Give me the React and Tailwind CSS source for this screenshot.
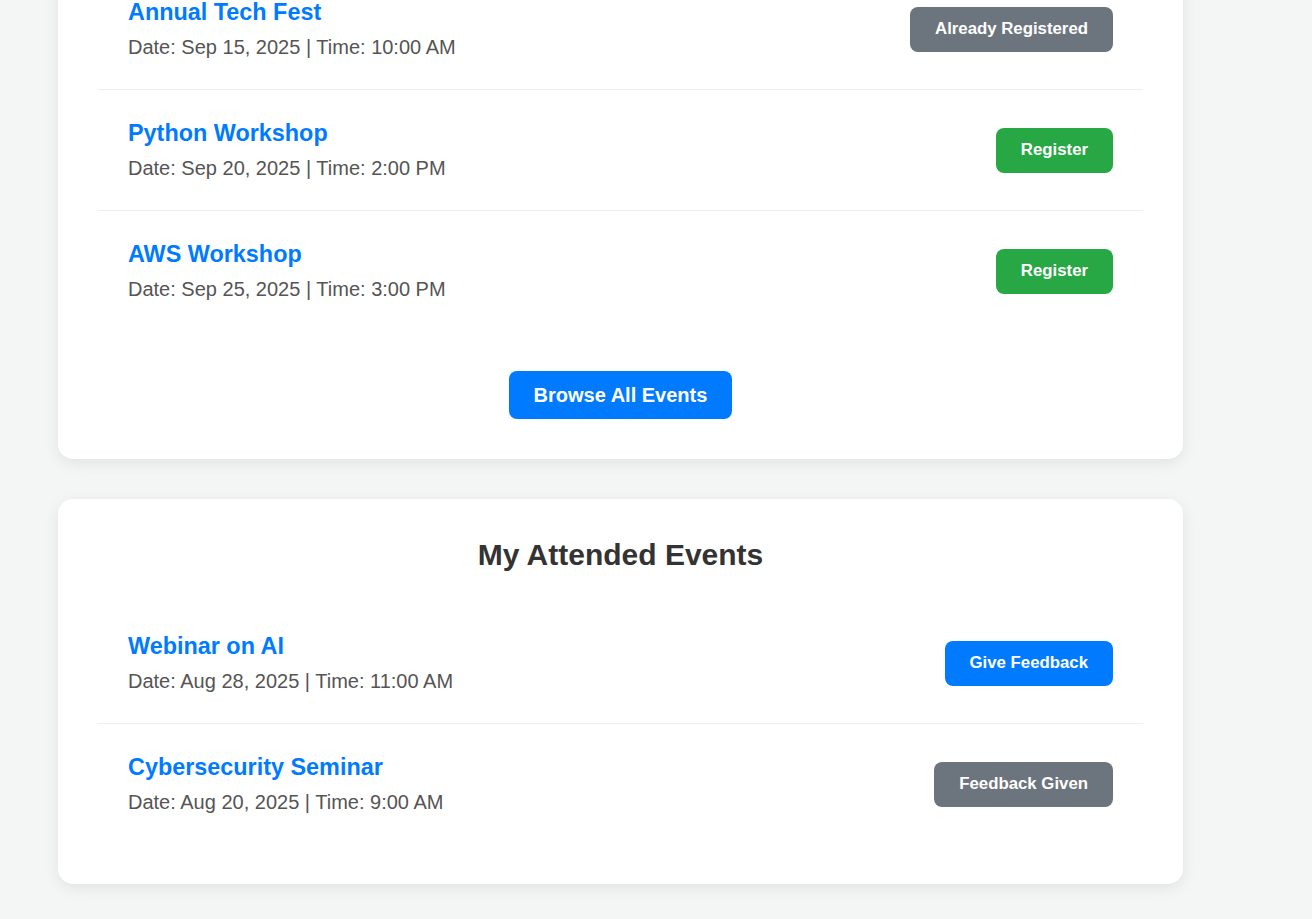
const upcoming = [
  { title: 'Annual Tech Fest', date: 'Sep 15, 2025', time: '10:00 AM', status: 'registered' },
  { title: 'Python Workshop', date: 'Sep 20, 2025', time: '2:00 PM', status: 'open' },
  { title: 'AWS Workshop', date: 'Sep 25, 2025', time: '3:00 PM', status: 'open' },
];

const attended = [
  { title: 'Webinar on AI', date: 'Aug 28, 2025', time: '11:00 AM', feedback: false },
  { title: 'Cybersecurity Seminar', date: 'Aug 20, 2025', time: '9:00 AM', feedback: true },
];

function EventRow({ title, date, time, last, children }) {
  return (
    <div
      className={`flex items-center justify-between px-[30px] py-[30px] ${
        last ? '' : 'border-b border-[#eeeeee]'
      }`}
    >
      <div>
        <h3 className="text-[23.4px] leading-[27px] font-bold text-[#007bff] mb-[10px]">{title}</h3>
        <p className="text-[20px] leading-[23px] text-[#555555]">
          Date: {date} | Time: {time}
        </p>
      </div>
      {children}
    </div>
  );
}

function SmallButton({ color, children }) {
  return (
    <button
      className={`${color} text-white text-[16.8px] leading-[19px] font-bold px-[25px] pt-[12px] pb-[14px] rounded-[8px]`}
    >
      {children}
    </button>
  );
}

export default function App() {
  return (
    <div
      className="min-h-screen bg-[#f4f5f5] overflow-hidden pb-[35px]"
      style={{ fontFamily: '"Liberation Sans", Arial, sans-serif' }}
    >
      <div className="ml-[58px] w-[1125px] flex flex-col gap-[40px]">
        {/* upcoming events card, scrolled so its heading sits above the fold */}
        <section className="-mt-[71px] bg-white rounded-[15px] p-[40px] shadow-[0_4px_15px_rgba(0,0,0,0.08)]">
          <div>
            {upcoming.map((ev, i) => (
              <EventRow key={ev.title} {...ev} last={i === upcoming.length - 1}>
                {ev.status === 'registered' ? (
                  <SmallButton color="bg-[#6c757d]">Already Registered</SmallButton>
                ) : (
                  <SmallButton color="bg-[#28a745]">Register</SmallButton>
                )}
              </EventRow>
            ))}
          </div>
          <div className="flex justify-center mt-[40px]">
            <button className="bg-[#007bff] text-white text-[20px] leading-[24px] font-bold px-[25px] py-[12px] rounded-[8px]">
              Browse All Events
            </button>
          </div>
        </section>

        <section className="bg-white rounded-[15px] p-[40px] shadow-[0_4px_15px_rgba(0,0,0,0.08)]">
          <h2 className="text-[30px] leading-[32px] font-bold text-[#333333] text-center mb-[32px]">
            My Attended Events
          </h2>
          <div>
            {attended.map((ev, i) => (
              <EventRow key={ev.title} {...ev} last={i === attended.length - 1}>
                {ev.feedback ? (
                  <SmallButton color="bg-[#6c757d]">Feedback Given</SmallButton>
                ) : (
                  <SmallButton color="bg-[#007bff]">Give Feedback</SmallButton>
                )}
              </EventRow>
            ))}
          </div>
        </section>
      </div>
    </div>
  );
}
